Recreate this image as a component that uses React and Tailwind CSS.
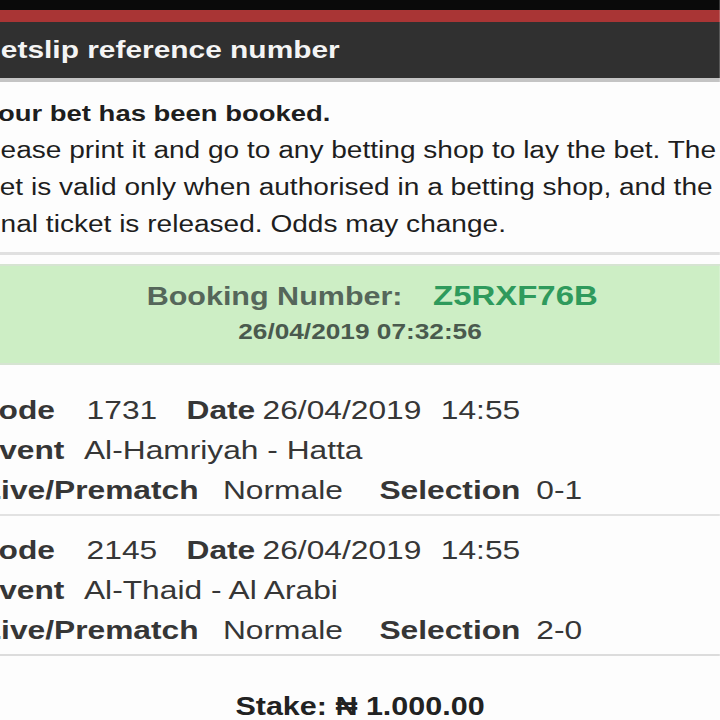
import React from 'react';

const font = { fontFamily: '"Liberation Sans", Arial, sans-serif' };

// the photo is stretched sideways, so the whole sheet is laid out at 590px and widened
const BetRow = ({ code, event, selection, last }) => {
  return (
    <div className={`pt-[14px] pb-[4px] text-[26px] leading-[40px] text-[#363636] ${last ? 'border-b-2 border-[#dcdcdc]' : 'border-b-2 border-[#e2e2e2]'}`}>
      <div className="flex items-baseline whitespace-nowrap -ml-[20px]">
        <span className="font-bold">Code</span>
        <span className="ml-[26px]">{code}</span>
        <span className="font-bold ml-[24px]">Date</span>
        <span className="ml-[6px]">26/04/2019</span>
        <span className="ml-[16px]">14:55</span>
      </div>
      <div className="flex items-baseline whitespace-nowrap -ml-[18px]">
        <span className="font-bold">Event</span>
        <span className="ml-[16px]">{event}</span>
      </div>
      <div className="flex items-baseline whitespace-nowrap -ml-[15px]">
        <span className="font-bold">Live/Prematch</span>
        <span className="ml-[20px]">Normale</span>
        <span className="font-bold ml-[30px]">Selection</span>
        <span className="ml-[13px]">{selection}</span>
      </div>
    </div>
  );
};

const App = () => {
  return (
    <div className="w-[720px] h-[720px] overflow-hidden bg-[#fdfdfd]" style={font}>
      <div className="w-[590.2px] origin-top-left scale-x-[1.22]">
        <div className="h-[10px] bg-[#0a0a0a]" />
        <div className="h-[12px] bg-[#a93535]" />
        <div className="h-[56px] bg-[#303030] flex items-center">
          <p className="-ml-[17px] text-[24.5px] font-bold text-[#f4f4f4] whitespace-nowrap">Betslip reference number</p>
        </div>
        <div className="h-[4px] bg-[#c4c4c4]" />

        <div className="pt-[14px] text-[#1e1e1e] whitespace-nowrap text-[23px] leading-[37px]">
          <p className="-ml-[15px] text-[22.5px] font-bold leading-[36px]">Your bet has been booked.</p>
          <p className="-ml-[20px]">Please print it and go to any betting shop to lay the bet. The</p>
          <p className="-ml-[13px]">bet is valid only when authorised in a betting shop, and the</p>
          <p className="-ml-[11px]">final ticket is released. Odds may change.</p>
        </div>

        <div className="mt-[9px] h-[3px] bg-[#e0e0e0]" />
        <div className="mt-[9px] h-[101px] bg-[#cdeec5] border-y-2 border-[#d6e4d2] flex flex-col items-center justify-center pb-[6px]">
          <div className="flex items-baseline gap-[25px] pl-[20px]">
            <span className="text-[25px] font-bold text-[#55665a]">Booking Number:</span>
            <span className="text-[27px] font-bold text-[#2f9a5c]">Z5RXF76B</span>
          </div>
          <p className="text-[21.5px] font-bold text-[#4a5a4e] leading-[30px]">26/04/2019 07:32:56</p>
        </div>

        <div className="mt-[11px]">
          <BetRow code="1731" event="Al-Hamriyah - Hatta" selection="0-1" />
          <BetRow code="2145" event="Al-Thaid - Al Arabi" selection="2-0" last />
        </div>

        <p className="mt-[32px] text-center text-[25px] font-bold text-[#222]">Stake: ₦ 1.000.00</p>
      </div>
    </div>
  );
};

export default App;
